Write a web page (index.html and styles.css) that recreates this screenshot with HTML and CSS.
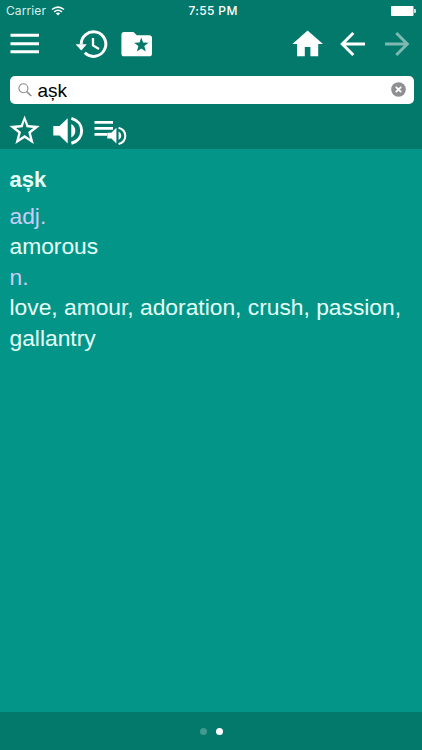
FILE: index.html
```
<!DOCTYPE html>
<html lang="en">
<head>
<meta charset="utf-8">
<title>Dictionary</title>
<link rel="stylesheet" href="styles.css">
</head>
<body>
<div class="app">
  <header class="header">
    <div class="status">
      <span class="carrier">Carrier</span>
      <svg class="wifi" width="14" height="10" viewBox="0 0 14 10" fill="none" stroke="#fff" stroke-width="1.6"><path d="M1 3.5Q7-1.3 13 3.5M3.1 5.8Q7 2.7 10.9 5.8"/><path d="M4.8 7.3Q7 5.6 9.2 7.3L7 9.5z" fill="#fff" stroke="none"/></svg>
      <span class="time">7:55 PM</span>
      <svg class="battery" width="25" height="10" viewBox="0 0 25 10" fill="#fff"><rect width="22.5" height="10" rx="1"/><path d="M23.2 3h.6q1 0 1 1v2q0 1-1 1h-.6z"/></svg>
    </div>
    <nav class="toolbar">
      <svg class="menu" width="30" height="30" viewBox="10 29 30 30" fill="#fff"><path d="M10.5 33.8H39v3H10.5zM10.5 42.2H39v3H10.5zM10.5 50.3H39v3H10.5z"/></svg>
      <svg class="history" width="34" height="30" viewBox="75 29 34 30" fill="none" stroke="#fff" stroke-width="3"><path d="M81.2 44.5A12.3 12.3 0 1 1 84.8 52.8"/><path d="M93 38v7.4l6 3.6" stroke-width="2.3"/><path d="M75.6 44.2H86.8L81.3 50.4z" fill="#fff" stroke="none"/></svg>
      <svg class="folder" width="32" height="30" viewBox="121 29 32 30" fill="#fff"><path fill-rule="evenodd" d="M124.2 32H133.5L136.8 35.2H149.2Q152 35.2 152 38.2V53.4Q152 56.3 149.2 56.3H124.2Q121.4 56.3 121.4 53.4V35Q121.4 32 124.2 32zM141.3 37.6L139.5 42.5 134.1 42.7 138.4 46.1 136.9 51.5 141.3 48.4 145.8 51.5 144.3 46.1 148.5 42.7 143.1 42.5z"/></svg>
      <svg class="home" width="32" height="30" viewBox="292 29 32 30" fill="#fff"><path d="M307.6 30.5L323 44H318.2V56.3H310.4V47H304.8V56.3H297V44H292.4z"/></svg>
      <svg class="back" width="26" height="30" viewBox="340 29 26 30" fill="none" stroke="#fff" stroke-width="3"><path d="M353.3 33L342.3 44 353.3 55M342.5 44H365"/></svg>
      <svg class="forward" width="26" height="30" viewBox="384 29 26 30" fill="none" stroke="#7cb9b2" stroke-width="3"><path d="M396.3 33L407.3 44 396.3 55M385 44H407.1"/></svg>
    </nav>
    <div class="search">
      <svg class="glass" width="14" height="14" viewBox="0 0 14 14" fill="none" stroke="#8b8b90" stroke-width="1.1"><circle cx="5.4" cy="5.3" r="4.5"/><path d="M8.7 8.6l4.6 4.4" stroke-width="1.5"/></svg>
      <span class="query">așk</span>
      <svg class="clear" width="15" height="15" viewBox="0 0 15 15"><circle cx="7.5" cy="7.5" r="7.3" fill="#8e8e93"/><path d="M4.8 4.8l5.4 5.4M10.2 4.8l-5.4 5.4" stroke="#fff" stroke-width="1.8"/></svg>
    </div>
    <div class="actions">
      <svg class="star" width="32" height="32" viewBox="9 114 32 32" fill="#fff"><path fill-rule="evenodd" d="M24.6 115.4L28.3 125.1 39.8 126 30.9 132.9 33.8 144 24.6 138 15.4 144 18.3 132.9 9.5 126 20.9 125.1zM24.6 121L22.6 127.3 16 127.9 21 131.9 19.2 138.7 24.6 135.1 30 138.7 28.2 131.9 33.2 127.9 26.6 127.3z"/></svg>
      <svg class="volume" width="32" height="32" viewBox="52 114 32 32" fill="#fff"><path d="M53.3 126H59.5L67.7 118.2V143.4L59.5 135.5H53.3zM71.3 124Q75.3 126.4 75.3 130.8T71.3 137.6z"/><path d="M71.4 118.4C85.1 122.2 85.1 139.4 71.4 143.2" fill="none" stroke="#fff" stroke-width="3"/></svg>
      <svg class="playlist" width="34" height="32" viewBox="94 114 34 32" fill="#fff"><path d="M94.5 121.1H113v2.7H94.5zM94.5 127.1H113v2.7H94.5zM94.5 133H107v2.7H94.5zM107.3 132.7H111.4L116.4 127.7V143.4L111.4 138.6H107.3zM118.6 131.5Q121.3 132.9 121.3 135.7T118.6 139.9z"/><path d="M118.6 127.8C127.5 130.4 127.5 141.5 118.6 144" fill="none" stroke="#fff" stroke-width="2"/></svg>
    </div>
  </header>
  <main class="entry">
    <h1>așk</h1>
    <p class="pos">adj.</p>
    <p>amorous</p>
    <p class="pos">n.</p>
    <p>love, amour, adoration, crush, passion, gallantry</p>
  </main>
  <footer class="pager"><i></i><i class="current"></i></footer>
</div>
</body>
</html>
```
FILE: styles.css
```
* { box-sizing: border-box; }
body { margin: 0; font-family: "Liberation Sans", Arial, sans-serif; }
svg { display: block; flex: none; }
.app { height: 750px; display: flex; flex-direction: column; background: #039688; overflow: hidden; }
.header { height: 149px; flex: none; background: #03796c; }
.status {
  height: 22px; display: flex; align-items: center; padding: 0 6px;
  color: #fff; font: 12px/22px Inter, sans-serif;
}
.carrier { width: 45px; letter-spacing: .1px; color: #d9efeb; }
.wifi { margin-top: -1px; }
.time { width: 60px; margin-left: 123.5px; font-weight: 500; letter-spacing: .35px; white-space: nowrap; }
.battery { margin-left: 142.5px; }
.toolbar { height: 53.5px; display: flex; padding: 7px 12px 0 10px; }
.history { margin-left: 35px; }
.folder { margin-left: 12px; }
.home { margin-left: 139px; }
.back { margin-left: 16px; }
.forward { margin-left: 18px; }
.search {
  height: 28.5px; margin: 0 8.5px 0 10px; padding: 0 8px;
  display: flex; align-items: center; background: #fff; border-radius: 5px;
}
.query { flex: 1; margin-left: 5.5px; font-size: 19px; line-height: 28px; color: #000; padding-top: 2px; }
.actions { display: flex; padding: 10px 9px 0; }
.volume { margin-left: 11px; }
.playlist { margin-left: 10px; }
.entry { flex: 1; padding: 15.5px 9.5px 0; color: #e6fff8; font-size: 22.8px; line-height: 30.6px; }
.entry h1 { margin: 0 0 5.5px; font-size: 22px; line-height: 30.6px; }
.entry p { margin: 0; }
.entry .pos { color: #c9cdfa; }
.pager { height: 38px; flex: none; display: flex; justify-content: center; align-items: center; gap: 9px; background: #03796c; }
.pager i { width: 7px; height: 7px; border-radius: 50%; background: #43998f; }
.pager .current { background: #fff; }
```
